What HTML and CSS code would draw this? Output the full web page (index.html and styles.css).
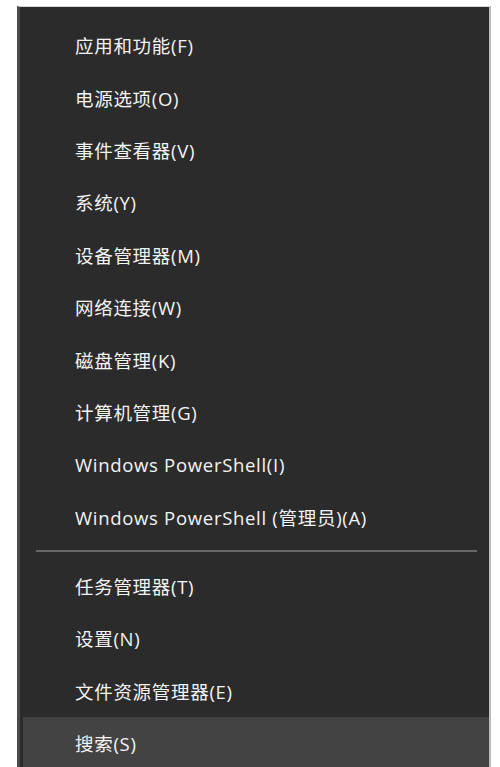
FILE: index.html
```html
<!DOCTYPE html>
<html lang="zh-CN">
<head>
<meta charset="utf-8">
<link rel="stylesheet" href="styles.css">
</head>
<body>
<div class="menu">
  <ul class="group">
    <li class="item">应用和功能(F)</li>
    <li class="item">电源选项(O)</li>
    <li class="item">事件查看器(V)</li>
    <li class="item">系统(Y)</li>
    <li class="item">设备管理器(M)</li>
    <li class="item">网络连接(W)</li>
    <li class="item">磁盘管理(K)</li>
    <li class="item">计算机管理(G)</li>
    <li class="item">Windows PowerShell(I)</li>
    <li class="item">Windows PowerShell (管理员)(A)</li>
  </ul>
  <div class="separator"></div>
  <ul class="group">
    <li class="item">任务管理器(T)</li>
    <li class="item">设置(N)</li>
    <li class="item">文件资源管理器(E)</li>
    <li class="item item-hover">搜索(S)</li>
  </ul>
</div>
</body>
</html>
```
FILE: styles.css
```css
html, body {
  margin: 0;
  padding: 0;
  background: #ffffff;
  height: 767px;
  overflow: hidden;
}

body {
  padding-top: 6px;
  padding-left: 17px;
  box-sizing: border-box;
}

.menu {
  width: 474px;
  height: 761px;
  overflow: hidden;
  box-sizing: border-box;
  background: #2b2b2b;
  border-top: 1px solid #d4d4d4;
  border-left: 3px solid #4a4a4a;
  border-right: 2px solid #bdbdbd;
  padding-top: 12px;
  font-family: "Open Sans", "Noto Sans CJK SC", sans-serif;
  font-size: 18.5px;
  letter-spacing: 0.7px;
  color: #f4f4f4;
}

.group {
  list-style: none;
  margin: 0;
  padding: 0 0 0 3px;
}

.item {
  height: 52.4px;
  display: flex;
  align-items: center;
  padding-left: 52px;
  white-space: nowrap;
}

.item-hover {
  background: #434343;
}

.separator {
  height: 17px;
  display: flex;
  align-items: center;
  padding: 0 12px 0 16px;
}

.separator::before {
  content: "";
  flex: 1;
  height: 2px;
  background: #666666;
}
```
